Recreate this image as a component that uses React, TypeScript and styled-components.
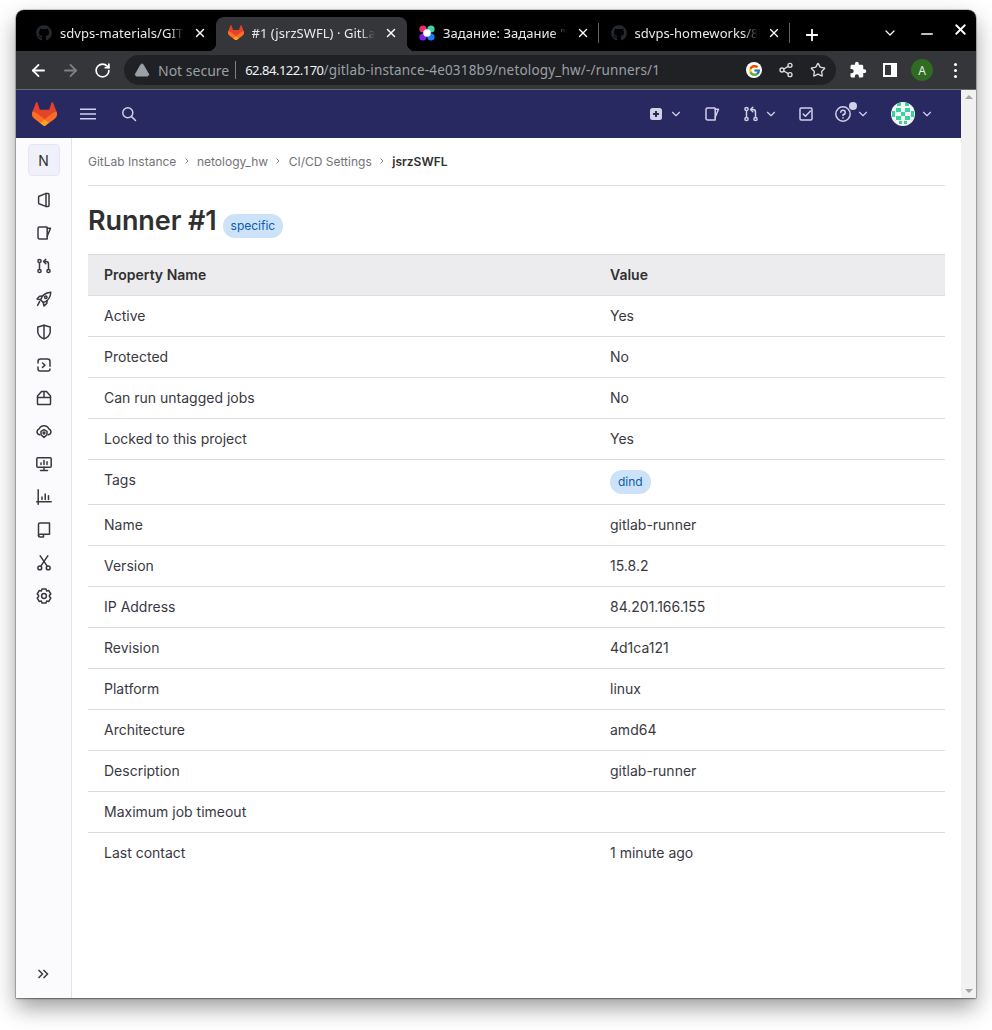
import React from 'react';
import styled, { createGlobalStyle } from 'styled-components';
import { FaGithub } from 'react-icons/fa';
import { FcGoogle } from 'react-icons/fc';
import { ArrowLeft, ArrowRight, RotateCw, Share2, Star, X, Plus, ChevronDown, Minus, TriangleAlert } from 'lucide-react';

const Global = createGlobalStyle`
  html, body { margin: 0; padding: 0; background: #fff; }
  body { font-family: Inter, "Liberation Sans", sans-serif; font-size: 14px; color: #303030; }
  * { box-sizing: border-box; }
`;

const Page = styled.div`
  width: 992px; height: 1030px; padding: 10px 16px 32px; overflow: hidden;
`;
const Win = styled.div`
  width: 960px; height: 988px; display: flex; flex-direction: column; overflow: hidden;
  border-radius: 8px 8px 0 0; background: #fff;
  box-shadow: 0 0 0 .5px rgba(0,0,0,.35), 0 1px 2px rgba(0,0,0,.35), 0 10px 22px rgba(0,0,0,.38);
`;
const TabBar = styled.div`
  height: 41px; flex: none; background: #000; display: flex; align-items: flex-end; padding-left: 8px;
  font-family: "Noto Sans", sans-serif; font-size: 13px; color: #e8eaed;
`;
const Tab = styled.div<{ $active?: boolean }>`
  position: relative; width: 191.5px; height: 34px; flex: none; display: flex; align-items: center;
  padding: 0 8px 3px 12px; gap: 8px; border-radius: 8px 8px 0 0;
  background: ${p => (p.$active ? '#35363a' : 'transparent')};
  ${p => p.$active && `
    &::before, &::after { content: ''; position: absolute; bottom: 0; width: 8px; height: 8px; }
    &::before { left: -8px; background: radial-gradient(circle at 0 0, transparent 8px, #35363a 8.5px); }
    &::after { right: -8px; background: radial-gradient(circle at 100% 0, transparent 8px, #35363a 8.5px); }
  `}
`;
const TabTitle = styled.span`
  flex: 1; min-width: 0; white-space: nowrap; overflow: hidden; letter-spacing: .05px;
  mask-image: linear-gradient(to right, #000 88%, transparent 100%);
`;
const CloseWrap = styled.span`
  width: 16px; height: 16px; display: flex; align-items: center; justify-content: center; flex: none; color: #fff;
`;
const TabSep = styled.span`
  width: 1px; height: 20px; background: #5f6368; flex: none; margin: 0 0 8px -1px;
`;
const TabEnd = styled.div`
  flex: 1; height: 100%; display: flex; align-items: center; color: #fff; position: relative;
`;
const NewTab = styled.span`
  display: flex; margin: 9px 0 0 13px;
`;
const WinBtn = styled.span<{ $x: number; $y: number }>`
  position: absolute; left: ${p => p.$x}px; top: ${p => p.$y}px; display: flex; color: #fff;
`;

const Toolbar = styled.div`
  height: 39px; flex: none; background: #35363a; border-bottom: 1px solid #6a6b6e;
  display: flex; align-items: center; padding: 0 0 0 12px; color: #fff;
`;
const NavIcon = styled.span<{ $dim?: boolean }>`
  width: 20px; height: 20px; margin-right: 12px; display: flex; align-items: center; justify-content: center;
  color: ${p => (p.$dim ? '#7f8184' : '#fff')};
`;
const Omni = styled.div`
  width: 712px; height: 30px; border-radius: 15px; background: #202124; margin-left: 0;
  display: flex; align-items: center; padding: 0 10px 0 10px;
  font-family: "Noto Sans", sans-serif; font-size: 14px; color: #9aa0a6;
`;
const NotSecure = styled.span`
  margin-left: 8px; color: #9aa0a6;
`;
const UrlSep = styled.span`
  width: 1px; height: 18px; background: #7c7f83; margin: 0 9px 0 6px;
`;
const Url = styled.span`
  flex: 1; white-space: nowrap; letter-spacing: .17px; font-size: 13.5px;
  b { font-weight: 400; color: #f1f3f4; font-size: 13px; letter-spacing: -.5px; }
`;
const OmniIcons = styled.span`
  display: flex; align-items: center; gap: 16px; color: #dadce0;
`;
const GCircle = styled.span`
  width: 16px; height: 16px; border-radius: 50%; background: #fff; display: flex; align-items: center; justify-content: center;
`;
const ToolRight = styled.div`
  display: flex; align-items: center; margin-left: 6px; color: #fff;
`;
const ExtBtn = styled.span`
  display: flex; width: 32px; justify-content: center;
`;
const Account = styled.span`
  width: 22px; height: 22px; border-radius: 50%; background: #2f6b20; color: #e8eaed; margin: 0 5px;
  display: flex; align-items: center; justify-content: center; font: 12px "Noto Sans", sans-serif;
`;
const Dots = styled.span`
  display: flex; flex-direction: column; gap: 3px; margin-left: 16px;
  i { width: 3px; height: 3px; background: #fff; border-radius: 50%; display: block; }
`;

const Viewport = styled.div`
  flex: 1; min-height: 0; display: flex;
`;
const PageCol = styled.div`
  flex: 1; min-width: 0; display: flex; flex-direction: column;
`;
const Scrollbar = styled.div`
  width: 15px; flex: none; background: #f1f1f1; display: flex; flex-direction: column; justify-content: space-between;
  align-items: center; padding: 5px 0;
`;
const Tri = styled.i<{ $down?: boolean }>`
  display: block; width: 0; height: 0; border-left: 4px solid transparent; border-right: 4px solid transparent;
  ${p => (p.$down ? 'border-top: 4px solid #a3a3a3;' : 'border-bottom: 4px solid #a3a3a3;')}
`;

const TopNav = styled.header`
  height: 48px; flex: none; background: #292961; display: flex; align-items: center; color: #d1d0e8;
`;
const LogoSlot = styled.span`
  display: flex; margin-left: 16px;
`;
const Burger = styled.span`
  display: flex; margin-left: 23px;
`;
const SearchBtn = styled.span`
  display: flex; margin-left: 25px;
`;
const NavRight = styled.div`
  margin-left: auto; display: flex; align-items: center; padding-right: 27px;
`;
const NavItem = styled.span<{ $gap: number }>`
  display: flex; align-items: center; position: relative; margin-right: ${p => p.$gap}px;
`;
const Chevron = styled(ChevronDown)`
  margin-left: 5px;
`;
const Dot = styled.i`
  position: absolute; left: 14px; top: -4px; width: 8px; height: 8px; border-radius: 50%; background: #d1d0e8;
`;

const Body = styled.div`
  flex: 1; min-height: 0; display: flex;
`;
const Sidebar = styled.nav`
  width: 56px; flex: none; background: #fbfafd; border-right: 1px solid #e4e4e7;
  display: flex; flex-direction: column; align-items: center; padding-top: 6px; color: #3a383f;
`;
const Avatar = styled.div`
  width: 32px; height: 32px; border-radius: 4px; background: #f0f0fb; border: 1px solid #e6e5f2;
  display: flex; align-items: center; justify-content: center; font-size: 14px; color: #303030; margin-bottom: 7px;
`;
const SideItem = styled.span`
  height: 33px; width: 100%; flex: none; display: flex; align-items: center; justify-content: center;
`;
const Collapse = styled.span`
  margin-top: auto; height: 48px; flex: none; display: flex; align-items: center; justify-content: center; padding-right: 1px;
`;
const Main = styled.main`
  flex: 1; min-width: 0; padding: 0 16px;
`;
const Crumbs = styled.div`
  height: 48px; display: flex; align-items: center; border-bottom: 1px solid #dcdcde; font-size: 12px; color: #737278; padding-bottom: 1px;
`;
const CrumbCaret = styled.span`
  display: flex; margin: 0 6.3px; color: #89888d;
`;
const CrumbNow = styled.b`
  font-weight: 600; color: #303030;
`;
const TitleRow = styled.div`
  display: flex; align-items: center; height: 68px; padding-top: 2px;
`;
const Title = styled.h1`
  margin: 0; font-size: 27px; line-height: 36px; font-weight: 600; color: #303030; letter-spacing: -.1px;
`;
const Badge = styled.span<{ $offset?: number }>`
  display: inline-flex; align-items: center; height: 24px; padding: 0 8px; border-radius: 12px;
  background: #cbe2f9; color: #0b5cad; font-size: 12px; font-weight: 400; line-height: 16px;
  margin-left: ${p => p.$offset || 0}px;
`;
const TitleBadge = styled(Badge)`
  margin-top: 10px;
`;
const Table = styled.table`
  width: 857px; border-collapse: collapse; table-layout: fixed; font-size: 14px; color: #3a383f;
`;
const Th = styled.th<{ $w?: number }>`
  text-align: left; font-weight: 600; color: #303030; height: 41px; padding: 0 16px 2px; background: #ececef;
  border-top: 1px solid #dcdcde; border-bottom: 1px solid #dcdcde;
  ${p => p.$w && `width: ${p.$w}px;`}
`;
const Td = styled.td`
  height: 41px; padding: 0 16px 2px; border-bottom: 1px solid #dcdcde; white-space: nowrap;
`;
const TagRow = styled.tr`
  td { height: 45px; padding-bottom: 0; }
`;
const TagLabel = styled.span`
  display: block; margin-top: -5px;
`;
const LastRow = styled.tr`
  td { border-bottom: none; }
`;

const Ic: React.FC<{ children: React.ReactNode; s?: number }> = ({ children, s = 16 }) => (
  <svg width={s} height={s} viewBox="0 0 16 16" fill="none" stroke="currentColor" strokeWidth={1.5} strokeLinecap="round" strokeLinejoin="round">
    {children}
  </svg>
);

const Fox: React.FC<{ s: number }> = ({ s }) => (
  <svg width={s} height={s * 24 / 25} viewBox="0 0 25 24">
    <path fill="#E24329" d="M24.5 9.6l-.03-.09L21.1.7a.88.88 0 0 0-1.67.1l-2.27 6.97H7.85L5.58.8A.88.88 0 0 0 3.9.7L.53 9.5l-.03.09a6.27 6.27 0 0 0 2.08 7.24l.01.01.03.02 5.13 3.84 2.54 1.92 1.54 1.17c.37.28.89.28 1.26 0l1.54-1.17 2.54-1.92 5.16-3.86a6.27 6.27 0 0 0 2.08-7.25z" />
    <path fill="#FC6D26" d="M24.5 9.6l-.03-.09a11.3 11.3 0 0 0-4.5 2.02L12.5 17.2l4.75 3.6 5.16-3.86a6.27 6.27 0 0 0 2.09-7.34z" />
    <path fill="#FCA326" d="M7.75 20.8l2.54 1.92 1.54 1.17c.37.28.89.28 1.26 0l1.54-1.17 2.54-1.92-4.75-3.6-4.67 3.6z" />
    <path fill="#FC6D26" d="M5.03 11.53A11.3 11.3 0 0 0 .53 9.5l-.03.1a6.27 6.27 0 0 0 2.08 7.24l.01.01.03.02 5.13 3.84 4.75-3.6-7.47-5.58z" />
  </svg>
);

const TaskFav = () => (
  <svg width="16" height="16" viewBox="0 0 16 16">
    <circle cx="4" cy="4" r="3.6" fill="#ef2a6c" />
    <circle cx="12" cy="4" r="3.6" fill="#3ed6a0" />
    <circle cx="4" cy="12" r="3.6" fill="#7a1fe8" />
    <circle cx="12" cy="12" r="3.6" fill="#1a7cf2" />
    <circle cx="8" cy="8" r="3.8" fill="#fff" />
  </svg>
);

const Identicon = () => (
  <svg width="24" height="24" viewBox="0 0 24 24">
    <defs><clipPath id="ic"><circle cx="12" cy="12" r="12" /></clipPath></defs>
    <g clipPath="url(#ic)">
      <rect width="24" height="24" fill="#f6f6f6" />
      <g fill="#36d3a0">
        <rect x="6" y="1" width="4" height="3" /><rect x="14" y="1" width="4" height="3" />
        <rect x="1" y="9" width="3" height="6" /><rect x="20" y="9" width="3" height="6" />
        <rect x="5" y="6" width="5" height="4" /><rect x="14" y="6" width="5" height="4" />
        <rect x="5" y="14" width="5" height="4" /><rect x="14" y="14" width="5" height="4" />
        <rect x="10" y="10" width="4" height="4" />
        <rect x="8" y="19" width="3" height="3" /><rect x="13" y="19" width="3" height="3" />
      </g>
    </g>
  </svg>
);

const IssueIcon = () => (
  <Ic>
    <path d="M3.5 2H10.5a.7.7 0 0 1 .7.7V14H3.5A1.5 1.5 0 0 1 2 12.5V3.5A1.5 1.5 0 0 1 3.5 2z" />
    <path d="M11.2 3.2H14.5L11.2 11.2" />
  </Ic>
);
const MrIcon = () => (
  <Ic>
    <circle cx="3.5" cy="3" r="1.6" />
    <circle cx="3.5" cy="13" r="1.6" />
    <circle cx="12.5" cy="13" r="1.6" />
    <path d="M3.5 4.8V11.2M12.5 11.2V6A2.5 2.5 0 0 0 10 3.5H8" />
    <path d="M9.8 1.2L7.6 3.5L9.8 5.8" />
  </Ic>
);

const sideIcons: React.ReactNode[] = [
  <Ic key="p"><path d="M3 4.2L9.6 1.6a.6.6 0 0 1 .2 0H12a1 1 0 0 1 1 1V13.4a1 1 0 0 1-1 1H9.8L3 11.8a1 1 0 0 1-.4-.6V4.8a1 1 0 0 1 .4-.6z" /><path d="M10 1.6V14.4" /></Ic>,
  <IssueIcon key="i" />,
  <MrIcon key="m" />,
  <Ic key="r"><path d="M6 10.2L4.6 8.8C5.6 5 9 1.8 14.8 1.2 14.4 7 11 10.4 7.2 11.4z" /><circle cx="9.8" cy="6.2" r="1.2" /><path d="M4.6 8.8L1 8 3.6 5.2 6.5 5M7.2 11.4L8 15l2.8-2.6.4-3" /><path d="M3.6 10.6L1.6 14.4" /></Ic>,
  <Ic key="s"><path d="M8 1.2L14.2 3V8C14.2 11 11 13.8 8 14.8 5 13.8 1.8 11 1.8 8V3z" /><path d="M8 1.2V14.8" /></Ic>,
  <Ic key="t"><path d="M2 6V4.5A2.5 2.5 0 0 1 4.5 2H11.5A2.5 2.5 0 0 1 14 4.5V9.2" /><path d="M14 12A2 2 0 0 1 12 14H4A2 2 0 0 1 2 12V10" /><path d="M6.5 6L9 8.2 6.5 10.4" /></Ic>,
  <Ic key="b"><path d="M5.5 1.5h5L14.5 6v7.7a.8.8 0 0 1-.8.8H2.3a.8.8 0 0 1-.8-.8V6z" /><path d="M1.5 7.5h13M8 1.5v6" /></Ic>,
  <Ic key="c"><path d="M3.6 11.8A3.2 3.2 0 0 1 1 8.6 3 3 0 0 1 3 6 5.4 5.4 0 0 1 13 6a3 3 0 0 1 2 2.6 3.2 3.2 0 0 1-2.6 3.2" /><path d="M8 6.6l3 1.7v3.4L8 14.4 5 11.7V8.3z" /><circle cx="8" cy="10" r=".9" /></Ic>,
  <Ic key="d"><rect x=".8" y="1.8" width="14.4" height="9.4" rx="1" /><path d="M4.5 14.5h7M8 11.2v3.3" /><path d="M5 8.4V7M8 8.4V4.6M11 8.4V5.8" /></Ic>,
  <Ic key="a"><path d="M2.2 .8v14.4M.7 12.8H15.2" /><path d="M6 10.5V8M9.2 10.5V5M12.5 10.5V6.8" /></Ic>,
  <Ic key="w"><path d="M4 1h9.5v11.2H4.2A1.7 1.7 0 0 0 2.5 13.9V2.5A1.5 1.5 0 0 1 4 1z" /><path d="M2.5 13.5A1.5 1.5 0 0 0 4 15h3.5M7.5 12.4V15" /></Ic>,
  <Ic key="x"><circle cx="3.8" cy="12.9" r="1.9" /><circle cx="12.2" cy="12.9" r="1.9" /><path d="M4.8 11.2L11.8 .8M11.2 11.2L4.2 .8" /></Ic>,
  <Ic key="g"><path d="M6 1h4l.7 2 2.1-.4 2 3.4L13.4 7.4V8.6l1.4 1.4-2 3.4-2.1-.4-.7 2H6l-.7-2-2.1.4-2-3.4L2.6 8.6V7.4L1.2 6l2-3.4 2.1.4z" /><circle cx="8" cy="8" r="2.4" /></Ic>,
];

const rows: [string, string][] = [
  ['Name', 'gitlab-runner'],
  ['Version', '15.8.2'],
  ['IP Address', '84.201.166.155'],
  ['Revision', '4d1ca121'],
  ['Platform', 'linux'],
  ['Architecture', 'amd64'],
  ['Description', 'gitlab-runner'],
  ['Maximum job timeout', ''],
];
const topRows: [string, string][] = [
  ['Active', 'Yes'],
  ['Protected', 'No'],
  ['Can run untagged jobs', 'No'],
  ['Locked to this project', 'Yes'],
];

const tabs = [
  { t: 'sdvps-materials/GITLAB', i: <FaGithub size={16} color="#24292f" /> },
  { t: '#1 (jsrzSWFL) · GitLab Instance', i: <Fox s={16} />, active: true },
  { t: 'Задание: Задание "Что', i: <TaskFav /> },
  { t: 'sdvps-homeworks/8-03', i: <FaGithub size={16} color="#24292f" /> },
];

const Caret = () => (
  <CrumbCaret>
    <svg width="8" height="8" viewBox="0 0 8 8" fill="none" stroke="currentColor" strokeWidth="1"><path d="M2.5 1.5L5 4 2.5 6.5" /></svg>
  </CrumbCaret>
);

export default function App() {
  return (
    <Page>
      <Global />
      <Win>
        <TabBar>
          {tabs.map((t, i) => (
            <React.Fragment key={i}>
              <Tab $active={t.active}>
                {t.i}
                <TabTitle>{t.t}</TabTitle>
                <CloseWrap><X size={14} strokeWidth={2.4} /></CloseWrap>
              </Tab>
              {i >= 2 && <TabSep />}
            </React.Fragment>
          ))}
          <TabEnd>
            <NewTab><Plus size={18} strokeWidth={2.4} /></NewTab>
            <WinBtn $x={92} $y={15}><ChevronDown size={16} strokeWidth={1.8} /></WinBtn>
            <WinBtn $x={128} $y={15}><Minus size={18} strokeWidth={2} /></WinBtn>
            <WinBtn $x={162} $y={11}><X size={17} strokeWidth={2.6} /></WinBtn>
          </TabEnd>
        </TabBar>
        <Toolbar>
          <NavIcon><ArrowLeft size={19} strokeWidth={2.3} /></NavIcon>
          <NavIcon $dim><ArrowRight size={19} strokeWidth={2.3} /></NavIcon>
          <NavIcon><RotateCw size={17} strokeWidth={2.4} /></NavIcon>
          <Omni>
            <TriangleAlert size={16} fill="#9aa0a6" stroke="#9aa0a6" strokeWidth={1.5} />
            <NotSecure>Not secure</NotSecure>
            <UrlSep />
            <Url><b>62.84.122.170</b>/gitlab-instance-4e0318b9/netology_hw/-/runners/1</Url>
            <OmniIcons>
              <GCircle><FcGoogle size={13} /></GCircle>
              <Share2 size={16} strokeWidth={2} />
              <Star size={16} strokeWidth={2} />
            </OmniIcons>
          </Omni>
          <ToolRight>
            <ExtBtn>
              <svg width="18" height="18" viewBox="0 0 24 24" fill="#fff"><path d="M20.5 11H19V7c0-1.1-.9-2-2-2h-4V3.5a2.5 2.5 0 0 0-5 0V5H4c-1.1 0-1.99.9-1.99 2v3.8H3.5c1.49 0 2.7 1.21 2.7 2.7s-1.21 2.7-2.7 2.7H2V20c0 1.1.9 2 2 2h3.8v-1.5c0-1.49 1.21-2.7 2.7-2.7 1.49 0 2.7 1.21 2.7 2.7V22H17c1.1 0 2-.9 2-2v-4h1.5a2.5 2.5 0 0 0 0-5z" /></svg>
            </ExtBtn>
            <ExtBtn>
              <svg width="14" height="14" viewBox="0 0 14 14"><rect x="1" y="1" width="12" height="12" fill="none" stroke="#fff" strokeWidth="2" /><rect x="8" y="1" width="5" height="12" fill="#fff" /></svg>
            </ExtBtn>
            <Account>A</Account>
            <Dots><i /><i /><i /></Dots>
          </ToolRight>
        </Toolbar>
        <Viewport>
          <PageCol>
            <TopNav>
              <LogoSlot><Fox s={25} /></LogoSlot>
              <Burger>
                <svg width="16" height="16" viewBox="0 0 16 16" fill="none" stroke="currentColor" strokeWidth="1.5"><path d="M0 3.2h16M0 8h16M0 12.8h16" /></svg>
              </Burger>
              <SearchBtn>
                <Ic><circle cx="6.8" cy="6.8" r="5" /><path d="M10.6 10.6L14.5 14.5" /></Ic>
              </SearchBtn>
              <NavRight>
                <NavItem $gap={21}>
                  <svg width="16" height="16" viewBox="0 0 16 16"><rect x="2" y="2" width="12" height="12" rx="2.5" fill="#d1d0e8" /><path d="M8 5v6M5 8h6" stroke="#292961" strokeWidth="2" /></svg>
                  <Chevron size={14} strokeWidth={2} />
                </NavItem>
                <NavItem $gap={23}><IssueIcon /></NavItem>
                <NavItem $gap={20}><MrIcon /><Chevron size={14} strokeWidth={2} /></NavItem>
                <NavItem $gap={21}>
                  <Ic><rect x="2" y="2" width="12" height="12" rx="1.2" /><path d="M5.2 8L7.4 10.2 12.5 5" /></Ic>
                </NavItem>
                <NavItem $gap={21}>
                  <Ic><circle cx="8" cy="8" r="7.2" /><path d="M5.8 6.2A2.2 2.2 0 1 1 8 8.6v1" /><path d="M8 11.8v.1" /></Ic>
                  <Dot />
                  <Chevron size={14} strokeWidth={2} />
                </NavItem>
                <NavItem $gap={0}><Identicon /><Chevron size={14} strokeWidth={2} /></NavItem>
              </NavRight>
            </TopNav>
            <Body>
              <Sidebar>
                <Avatar>N</Avatar>
                {sideIcons.map((icon, i) => <SideItem key={i}>{icon}</SideItem>)}
                <Collapse>
                  <svg width="12" height="12" viewBox="0 0 12 12" fill="none" stroke="currentColor" strokeWidth="1.5"><path d="M1.5 2L5.5 6 1.5 10M6.5 2L10.5 6 6.5 10" /></svg>
                </Collapse>
              </Sidebar>
              <Main>
                <Crumbs>
                  <span>GitLab Instance</span><Caret />
                  <span>netology_hw</span><Caret />
                  <span>CI/CD Settings</span><Caret />
                  <CrumbNow>jsrzSWFL</CrumbNow>
                </Crumbs>
                <TitleRow>
                  <Title>Runner #1</Title>
                  <TitleBadge $offset={6}>specific</TitleBadge>
                </TitleRow>
                <Table>
                  <thead>
                    <tr><Th $w={506}>Property Name</Th><Th>Value</Th></tr>
                  </thead>
                  <tbody>
                    {topRows.map(r => <tr key={r[0]}><Td>{r[0]}</Td><Td>{r[1]}</Td></tr>)}
                    <TagRow><Td><TagLabel>Tags</TagLabel></Td><Td><Badge>dind</Badge></Td></TagRow>
                    {rows.map(r => <tr key={r[0]}><Td>{r[0]}</Td><Td>{r[1]}</Td></tr>)}
                    <LastRow><Td>Last contact</Td><Td>1 minute ago</Td></LastRow>
                  </tbody>
                </Table>
              </Main>
            </Body>
          </PageCol>
          <Scrollbar><Tri /><Tri $down /></Scrollbar>
        </Viewport>
      </Win>
    </Page>
  );
}
